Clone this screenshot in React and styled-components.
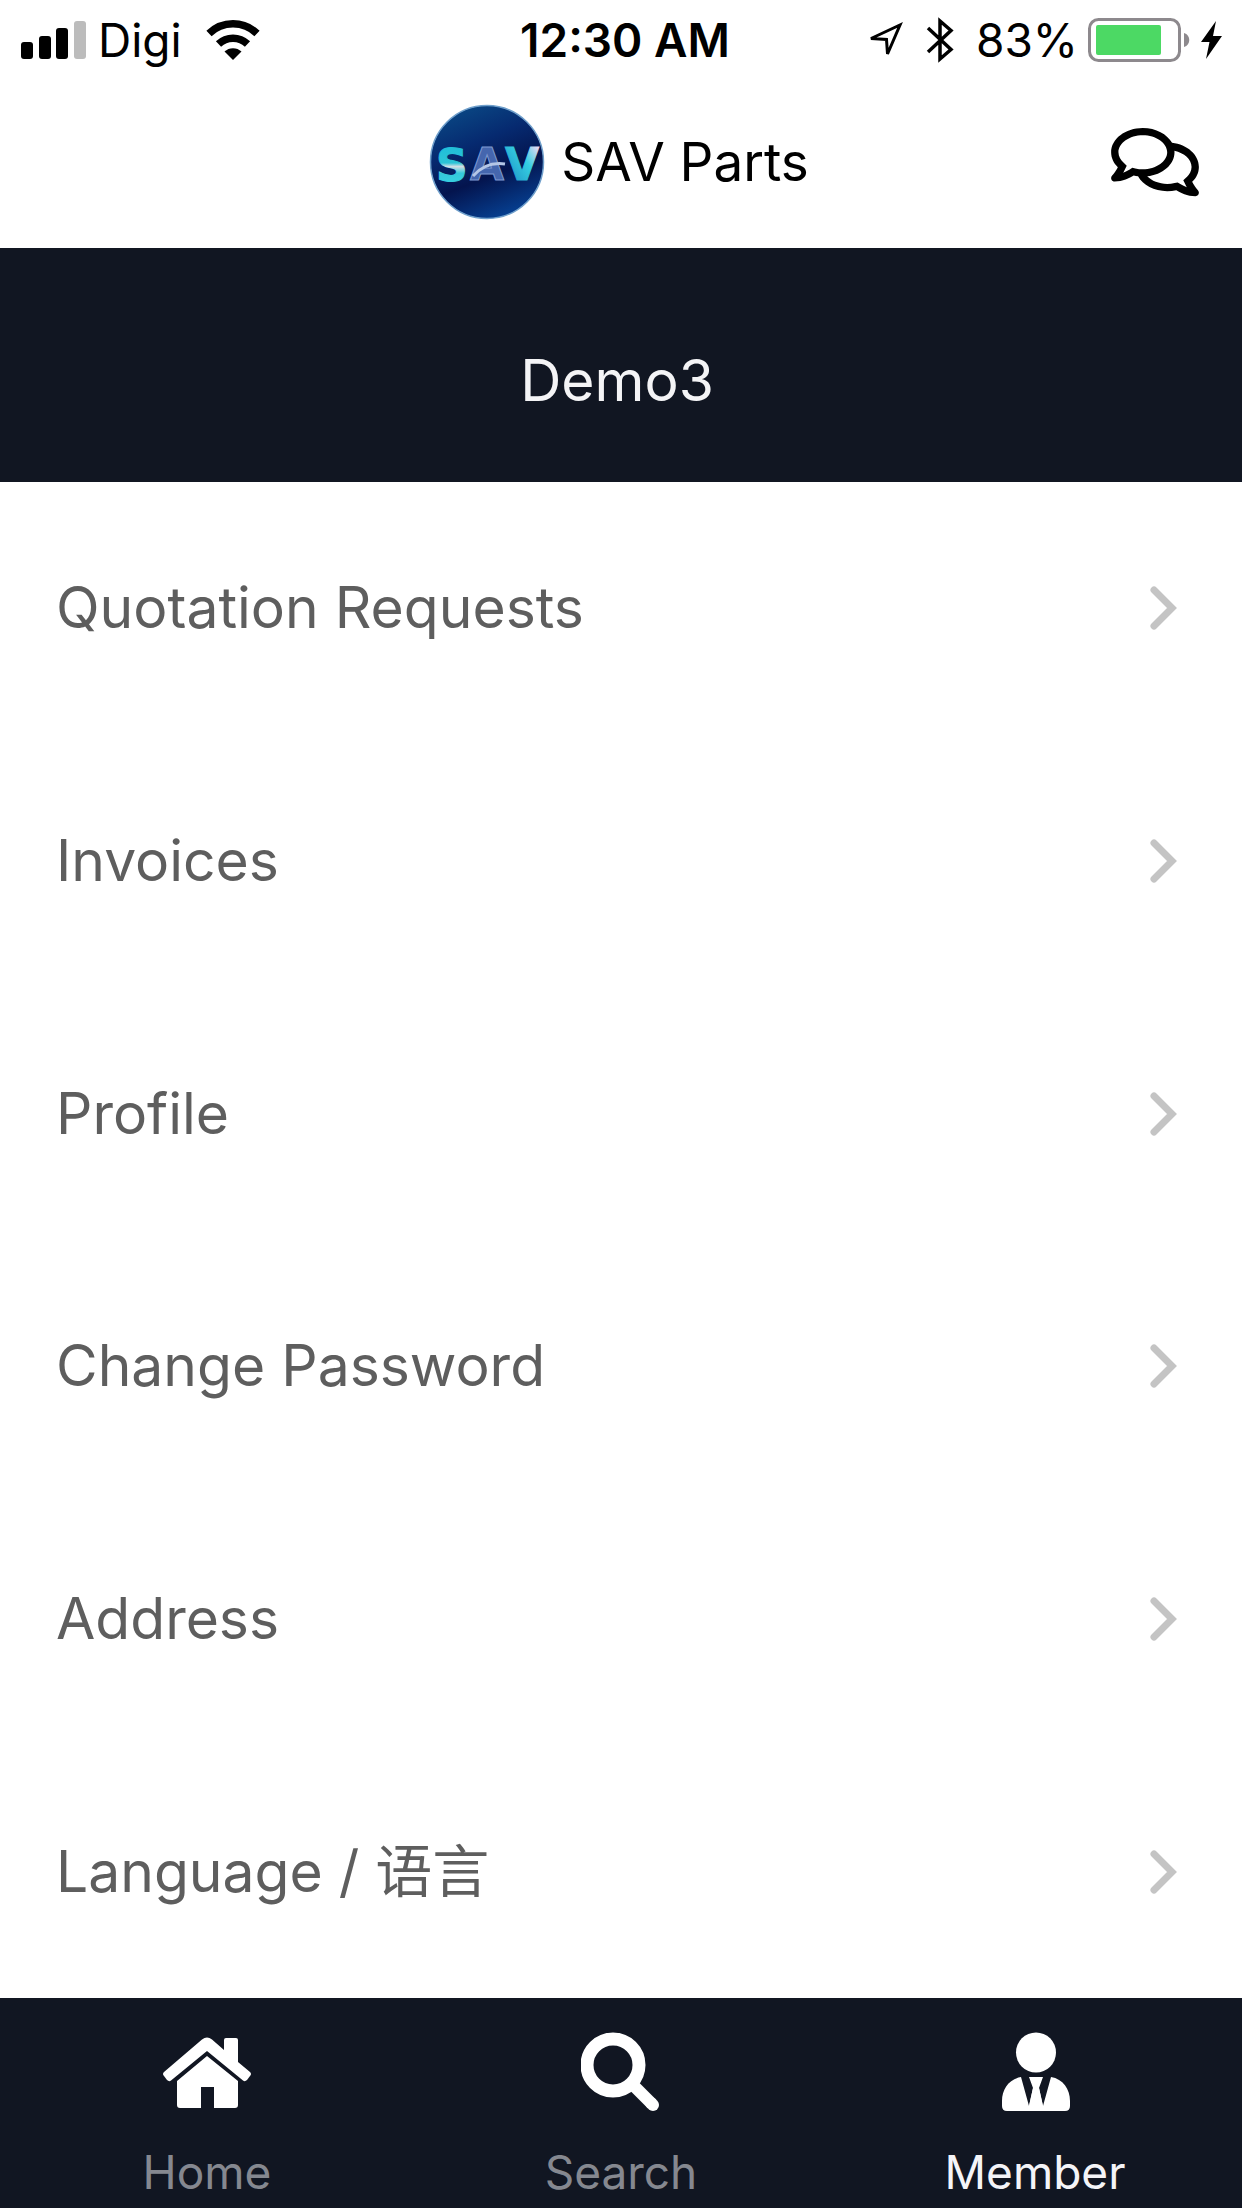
import React from "react";
import styled, { createGlobalStyle } from "styled-components";
import { FaRegComments } from "react-icons/fa";

const GlobalStyle = createGlobalStyle`
  *, *::before, *::after { box-sizing: border-box; }
  body {
    margin: 0;
    background: #fff;
    color: #000;
    font-family: Inter, "Noto Sans CJK SC", sans-serif;
  }
  svg { display: block; flex: none; }
`;

const Screen = styled.div`
  min-height: 100vh;
  display: flex;
  flex-direction: column;
`;

const StatusBar = styled.div`
  height: 80px;
  padding: 0 20px;
  display: grid;
  grid-template-columns: 1fr auto 1fr;
  align-items: center;
  font-size: 46px;
  line-height: 56px;
`;

const StatusGroup = styled.div`
  display: flex;
  align-items: center;
  justify-content: ${(p) => (p.$end ? "flex-end" : "flex-start")};
  gap: ${(p) => p.$gap}px;
`;

const Clock = styled.time`
  padding-left: 8px;
  font-weight: 600;
`;

const Header = styled.header`
  height: 168px;
  padding: 0 43px 4px;
  display: grid;
  grid-template-columns: 1fr auto 1fr;
  align-items: center;
`;

const Brand = styled.h1`
  grid-column: 2;
  margin: 0;
  padding-right: 4px;
  display: flex;
  align-items: center;
  gap: 16px;
  font-size: 53px;
  line-height: 64px;
  font-weight: 400;
`;

const ChatButton = styled.button`
  justify-self: end;
  padding: 0;
  border: 0;
  background: none;
  color: #000;
  cursor: pointer;

  svg { width: 88px; height: 78px; }
`;

const Banner = styled.h2`
  height: 234px;
  margin: 0;
  padding: 32px 8px 0 0;
  display: flex;
  align-items: center;
  justify-content: center;
  background: #111622;
  color: #f4f4f6;
  font-size: 57px;
  line-height: 72px;
  font-weight: 400;
`;

const Menu = styled.ul`
  flex: 1;
  margin: 0;
  padding: 0;
  list-style: none;
  display: flex;
  flex-direction: column;
`;

const MenuItem = styled.li`
  flex: 1;
  display: flex;
`;

const MenuLink = styled.a`
  flex: 1;
  padding: 0 65px 0 56px;
  display: flex;
  align-items: center;
  justify-content: space-between;
  color: #5e5e5e;
  font-size: 57px;
  line-height: 72px;
  text-decoration: none;
`;

const TabBar = styled.nav`
  height: 210px;
  display: grid;
  grid-template-columns: repeat(3, 1fr);
  background: #111622;
`;

const Tab = styled.a`
  padding-top: 34px;
  display: flex;
  flex-direction: column;
  align-items: center;
  gap: 28px;
  color: ${(p) => (p.$active ? "#f4f4f8" : "#858890")};
  font-size: 46px;
  line-height: 64px;
  text-decoration: none;
`;

const SignalIcon = () => (
  <svg width="66" height="40" viewBox="0 0 66 40" aria-hidden="true">
    <rect x="1" y="22" width="12" height="17" rx="3" />
    <rect x="19" y="16" width="12" height="23" rx="3" />
    <rect x="36" y="8" width="12" height="31" rx="3" />
    <rect x="54" y="1" width="12" height="38" rx="3" fill="#bcbcbc" />
  </svg>
);

const WifiIcon = () => (
  <svg width="54" height="40" viewBox="0 0 54 40" fill="none" stroke="#000" strokeWidth="7.500" aria-hidden="true">
    <path d="M3 13.500a34.500 34.500 0 0 1 48 0" />
    <path d="M12.500 24a21 21 0 0 1 29 0" />
    <path d="M18.500 31.500a12.500 12.500 0 0 1 17 0L27 40z" fill="#000" stroke="none" />
  </svg>
);

const LocationIcon = () => (
  <svg width="38" height="40" viewBox="0 0 38 40" fill="none" stroke="#000" strokeWidth="3" aria-hidden="true">
    <path d="M5 18.500 34 5 21.500 34 20.500 19.500z" />
  </svg>
);

const BluetoothIcon = () => (
  <svg width="28" height="46" viewBox="0 0 28 46" fill="none" stroke="#000" strokeWidth="3.500" aria-hidden="true">
    <path d="M2 11 25 32.500 14 42V4l11 9.500L2 35" />
  </svg>
);

const BatteryIcon = () => (
  <svg width="103" height="44" viewBox="0 0 103 44" aria-hidden="true">
    <rect x="1.500" y="1.500" width="90" height="41" rx="9" fill="none" stroke="#8d898d" strokeWidth="3" />
    <rect x="8" y="7" width="65" height="30" rx="2" fill="#4cd964" />
    <path d="M96 15c7 2 7 12 0 14z" fill="#8d898d" />
  </svg>
);

const BoltIcon = () => (
  <svg width="21" height="38" viewBox="0 0 21 38" aria-hidden="true">
    <path d="M15 0 0 21h8.500L5 38 21 15h-9z" />
  </svg>
);

const Logo = () => (
  <svg width="116" height="116" viewBox="0 0 116 116" role="img" aria-label="SAV">
    <defs>
      <linearGradient id="disc" x1="0.2" y1="0" x2="0.6" y2="1">
        <stop offset="0" stopColor="#0a4a86" />
        <stop offset="0.35" stopColor="#062a70" />
        <stop offset="0.65" stopColor="#04144e" />
        <stop offset="1" stopColor="#063f90" />
      </linearGradient>
      <linearGradient id="ess" x1="0" y1="0" x2="0" y2="1">
        <stop offset="0.2" stopColor="#22bfd8" />
        <stop offset="0.45" stopColor="#2cc4d6" />
        <stop offset="0.52" stopColor="#d2dfe4" />
        <stop offset="0.65" stopColor="#35c8da" />
        <stop offset="1" stopColor="#38d6e6" />
      </linearGradient>
      <linearGradient id="vee" x1="0" y1="1" x2="1" y2="0">
        <stop offset="0.1" stopColor="#1c8fc4" />
        <stop offset="0.6" stopColor="#35cfe2" />
        <stop offset="0.9" stopColor="#e6d8f4" />
      </linearGradient>
    </defs>
    <circle cx="58" cy="58" r="56.500" fill="url(#disc)" stroke="#6f9fcb" strokeWidth="1.500" />
    <g fontFamily="DejaVu Sans, sans-serif" fontWeight="700" fontSize="44">
      <text x="7" y="77" fill="url(#ess)" stroke="url(#ess)" strokeWidth="1">S</text>
      <text x="41" y="76" fill="#4566ae" stroke="#7f9bd0" strokeWidth="1">A</text>
      <text x="76" y="76" fill="url(#vee)" stroke="url(#vee)" strokeWidth="1">V</text>
    </g>
    <path d="M44 72c9-10 19-14 32-12" fill="none" stroke="#b4c6e6" strokeWidth="3" />
  </svg>
);

const ChevronIcon = () => (
  <svg width="28" height="46" viewBox="0 0 28 46" fill="none" stroke="#c4c4c4" strokeWidth="7" strokeLinecap="round" aria-hidden="true">
    <path d="M5 5 23 23 5 41" />
  </svg>
);

const HomeIcon = () => (
  <svg width="88" height="80" viewBox="0 0 88 80" fill="#fff" aria-hidden="true">
    <path d="M39 7.500Q44 3.500 49 7.500L61 18V8q0-2 2-2h10q2 0 2 2v22l12 10q2 2 0 4l-3 4q-2 2-4 .5L44 19 8 48.500q-2 1.500-4-.5l-3-4q-2-2 0-4z" />
    <path d="M44 24 75 49v24q0 3-3 3H51V55H38v21H17q-3 0-3-3V49z" />
  </svg>
);

const SearchIcon = () => (
  <svg width="80" height="80" viewBox="0 0 80 80" fill="none" stroke="#fff" aria-hidden="true">
    <circle cx="32" cy="33" r="26" strokeWidth="13" />
    <path d="M53 54 71 72" strokeWidth="12" />
    <path d="M70 71 72 73" strokeWidth="12" strokeLinecap="round" strokeLinejoin="round" />
  </svg>
);

const MemberIcon = () => (
  <svg width="70" height="80" viewBox="0 0 70 80" fill="#fff" aria-hidden="true">
    <circle cx="36" cy="20.500" r="20" />
    <path d="M21 45 29 74 33 56 29 45h14l-4 11 4 18 8-29C63 47 70 57 70 69v5q0 5-5 5H7q-5 0-5-5v-5C2 57 9 47 21 45z" />
    <path d="M33 56 29 74h14l-4-18z" />
  </svg>
);

const MENU = [
  "Quotation Requests",
  "Invoices",
  "Profile",
  "Change Password",
  "Address",
  "Language / 语言",
];

const TABS = [
  { label: "Home", Icon: HomeIcon },
  { label: "Search", Icon: SearchIcon },
  { label: "Member", Icon: MemberIcon, active: true },
];

export default function App() {
  return (
    <Screen>
      <GlobalStyle />
      <StatusBar>
        <StatusGroup $gap={24}>
          <StatusGroup $gap={12}>
            <SignalIcon />
            <span>Digi</span>
          </StatusGroup>
          <WifiIcon />
        </StatusGroup>
        <Clock>12:30 AM</Clock>
        <StatusGroup $gap={22} $end>
          <LocationIcon />
          <BluetoothIcon />
          <StatusGroup $gap={10} $end>
            <span>83%</span>
            <BatteryIcon />
            <BoltIcon />
          </StatusGroup>
        </StatusGroup>
      </StatusBar>
      <Header>
        <Brand>
          <Logo />
          SAV Parts
        </Brand>
        <ChatButton type="button" aria-label="Messages">
          <FaRegComments />
        </ChatButton>
      </Header>
      <Banner>Demo3</Banner>
      <Menu>
        {MENU.map((label) => (
          <MenuItem key={label}>
            <MenuLink href="#">
              <span>{label}</span>
              <ChevronIcon />
            </MenuLink>
          </MenuItem>
        ))}
      </Menu>
      <TabBar>
        {TABS.map(({ label, Icon, active }) => (
          <Tab key={label} href="#" $active={active} aria-current={active ? "page" : undefined}>
            <Icon />
            {label}
          </Tab>
        ))}
      </TabBar>
    </Screen>
  );
}
